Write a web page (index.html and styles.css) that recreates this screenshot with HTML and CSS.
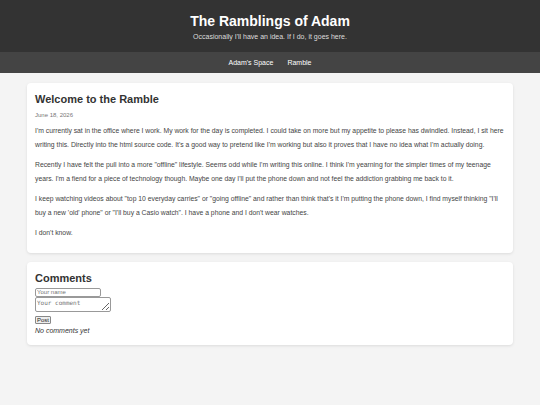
FILE: index.html
```html
<!DOCTYPE html>
<html lang="en">
<head>
  <meta charset="UTF-8">
  <meta name="viewport" content="width=device-width, initial-scale=1.0">
  <title>The Ramblings of Adam</title>
  <link rel="stylesheet" href="styles.css">
</head>
<body>
  <header class="site-header">
    <h1>The Ramblings of Adam</h1>
    <p>Occasionally I'll have an idea. If I do, it goes here.</p>
  </header>
  <nav class="site-nav">
    <a href="#">Adam's Space</a>
    <a href="#">Ramble</a>
  </nav>

  <main class="content">
    <article class="card">
      <h2>Welcome to the Ramble</h2>
      <div class="date">June 18, 2026</div>
      <p>I'm currently sat in the office where I work. My work for the day is completed. I could take on more but my appetite to please has dwindled. Instead, I sit here writing this. Directly into the html source code. It's a good way to pretend like I'm working but also it proves that I have no idea what I'm actually doing.</p>
      <p>Recently I have felt the pull into a more "offline" lifestyle. Seems odd while I'm writing this online. I think I'm yearning for the simpler times of my teenage years. I'm a fiend for a piece of technology though. Maybe one day I'll put the phone down and not feel the addiction grabbing me back to it.</p>
      <p>I keep watching videos about "top 10 everyday carries" or "going offline" and rather than think that's it I'm putting the phone down, I find myself thinking "I'll buy a new 'old' phone" or "I'll buy a Casio watch". I have a phone and I don't wear watches.</p>
      <p>I don't know.</p>
    </article>

    <!-- Comments -->
    <section class="card comments">
      <h3>Comments</h3>
      <form id="commentForm">
        <input type="text" id="commentName" placeholder="Your name">
        <textarea id="commentText" placeholder="Your comment"></textarea>
        <button type="button">Post</button>
      </form>
      <div class="no-comments">No comments yet</div>
    </section>
  </main>
</body>
</html>
```

FILE: styles.css
```css
body {
  margin: 0;
  background: #f4f4f4;
  font-family: "Liberation Sans", Arial, sans-serif;
  color: #333;
}
.site-header {
  background: #333;
  color: #fff;
  text-align: center;
  padding: 12px 0 10px;
  height: 30px;
}
.site-header h1 {
  margin: 0;
  font-size: 14px;
  line-height: 18px;
}
.site-header p {
  margin: 3px 0 0;
  font-size: 7px;
  color: #ddd;
}
.site-nav {
  background: #444;
  height: 21px;
  display: flex;
  justify-content: center;
  align-items: center;
  gap: 14px;
}
.site-nav a {
  color: #fff;
  text-decoration: none;
  font-size: 7px;
}
.content {
  width: 486px;
  margin: 10px auto;
}
.card {
  background: #fff;
  border-radius: 4px;
  box-shadow: 0 1px 3px rgba(0, 0, 0, 0.1);
  padding: 9px 8px 6px;
  margin-bottom: 9px;
}
.card h2 {
  margin: 0 0 6px;
  font-size: 11px;
  line-height: 14px;
}
.date {
  font-size: 6px;
  color: #777;
  margin-bottom: 6px;
}
.card p {
  font-size: 6.8px;
  line-height: 13.5px;
  color: #444;
  margin: 0 0 7px;
}
.comments {
  padding-bottom: 11px;
}
.comments h3 {
  margin: 0 0 3px;
  font-size: 11px;
  line-height: 14px;
}
.comments form {
  font-size: 6px;
  line-height: 1;
}
.comments input {
  display: block;
  box-sizing: border-box;
  width: 66px;
  height: 9px;
  font-size: 6px;
  padding: 0 1px;
  border: 1px solid #999;
  border-radius: 2px;
  margin: 0;
}
.comments textarea {
  display: block;
  box-sizing: border-box;
  width: 76px;
  height: 15px;
  font-size: 6px;
  padding: 1px;
  border: 1px solid #999;
  border-radius: 2px;
  margin: 0;
  resize: vertical;
}
.comments button {
  display: block;
  font-size: 6px;
  line-height: 6px;
  padding: 0 1px;
  margin-top: 4px;
  border: 1px solid #888;
  border-radius: 1px;
  background: #eee;
  color: #222;
}
.no-comments {
  font-size: 7px;
  font-style: italic;
  margin-top: 3px;
}
```
